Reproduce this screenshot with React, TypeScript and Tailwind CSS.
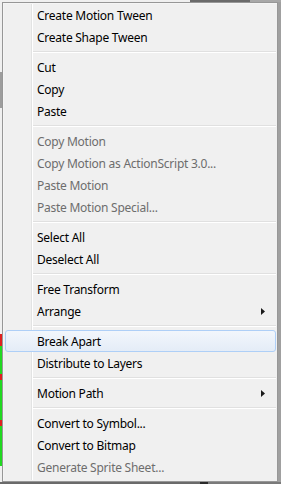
type Item = { label: string; disabled?: boolean; sub?: boolean; active?: boolean } | "sep";

const items: Item[] = [
  { label: "Create Motion Tween" },
  { label: "Create Shape Tween" },
  "sep",
  { label: "Cut" },
  { label: "Copy" },
  { label: "Paste" },
  "sep",
  { label: "Copy Motion", disabled: true },
  { label: "Copy Motion as ActionScript 3.0...", disabled: true },
  { label: "Paste Motion", disabled: true },
  { label: "Paste Motion Special...", disabled: true },
  "sep",
  { label: "Select All" },
  { label: "Deselect All" },
  "sep",
  { label: "Free Transform" },
  { label: "Arrange", sub: true },
  "sep",
  { label: "Break Apart", active: true },
  { label: "Distribute to Layers" },
  "sep",
  { label: "Motion Path", sub: true },
  "sep",
  { label: "Convert to Symbol..." },
  { label: "Convert to Bitmap" },
  { label: "Generate Sprite Sheet...", disabled: true },
];

function Arrow() {
  return (
    <svg width="4" height="7" viewBox="0 0 4 7" className="mr-[10px] shrink-0">
      <path d="M0 0 L4 3.5 L0 7 Z" fill="#1a1a1a" />
    </svg>
  );
}

export default function App() {
  return (
    <div className="flex h-[484px] w-[281px] flex-col overflow-hidden bg-[#9a9a9a] font-['Noto_Sans',_'Liberation_Sans',_sans-serif]">
      <div className="flex h-[2px] shrink-0">
        <div className="w-[190px] bg-[#f0f0f0]" />
        <div className="w-[60px] bg-[#6a6a6a]" />
        <div className="flex-1 bg-[#a8a8a8]" />
      </div>
      <div className="flex h-[480px] shrink-0">
        {/* stage edge behind the menu */}
        <div className="flex w-[2px] flex-col bg-[#f0f0f0]">
          <div className="mt-[70px] h-[36px] bg-[#9d9d9d]" />
          <div className="mt-[226px] h-[12px] bg-[#e02020]" />
          <div className="h-[28px] bg-[#22d822]" />
          <div className="h-[6px] bg-[#e02020]" />
          <div className="h-[40px] bg-[#22d822]" />
          <div className="h-[6px] bg-[#e02020]" />
          <div className="h-[40px] bg-[#22d822]" />
        </div>

        <div className="relative flex w-[276px] flex-col border border-[#979797] bg-[#f0f0f0] py-[1px] pr-[1px] shadow-[inset_1px_1px_0_#f5f5f5]">
          <div className="absolute bottom-[1px] left-[28px] top-[1px] w-[2px] border-l border-r border-l-[#e2e3e3] border-r-white" />
          {items.map((it, i) =>
            it === "sep" ? (
              <div key={i} className="flex h-[8px] flex-col justify-center pl-[30px]">
                <div className="h-px bg-[#e0e0e0]" />
                <div className="h-px bg-white" />
              </div>
            ) : (
              <div
                key={i}
                className={`relative ml-[2px] flex h-[22px] items-center rounded-[3px] border ${
                  it.active
                    ? "border-[#aecff7] bg-gradient-to-b from-[#f2f6fc] to-[#e4ecf7]"
                    : "border-transparent"
                }`}
              >
                <span
                  className={`flex-1 pl-[31px] pt-[2px] text-[12px] leading-[18px] tracking-[-0.25px] ${
                    it.disabled ? "text-[#6d6d6d]" : "text-black"
                  }`}
                >
                  {it.label}
                </span>
                {it.sub && <Arrow />}
              </div>
            )
          )}
        </div>
        <div className="flex-1 bg-[#a0a0a0]" />
      </div>
      <div className="flex flex-1">
        <div className="w-[200px] bg-[#6a6a6a]" />
        <div className="w-[8px] bg-[#2a2a2a]" />
        <div className="flex-1 bg-[#7a7a7a]" />
      </div>
    </div>
  );
}
